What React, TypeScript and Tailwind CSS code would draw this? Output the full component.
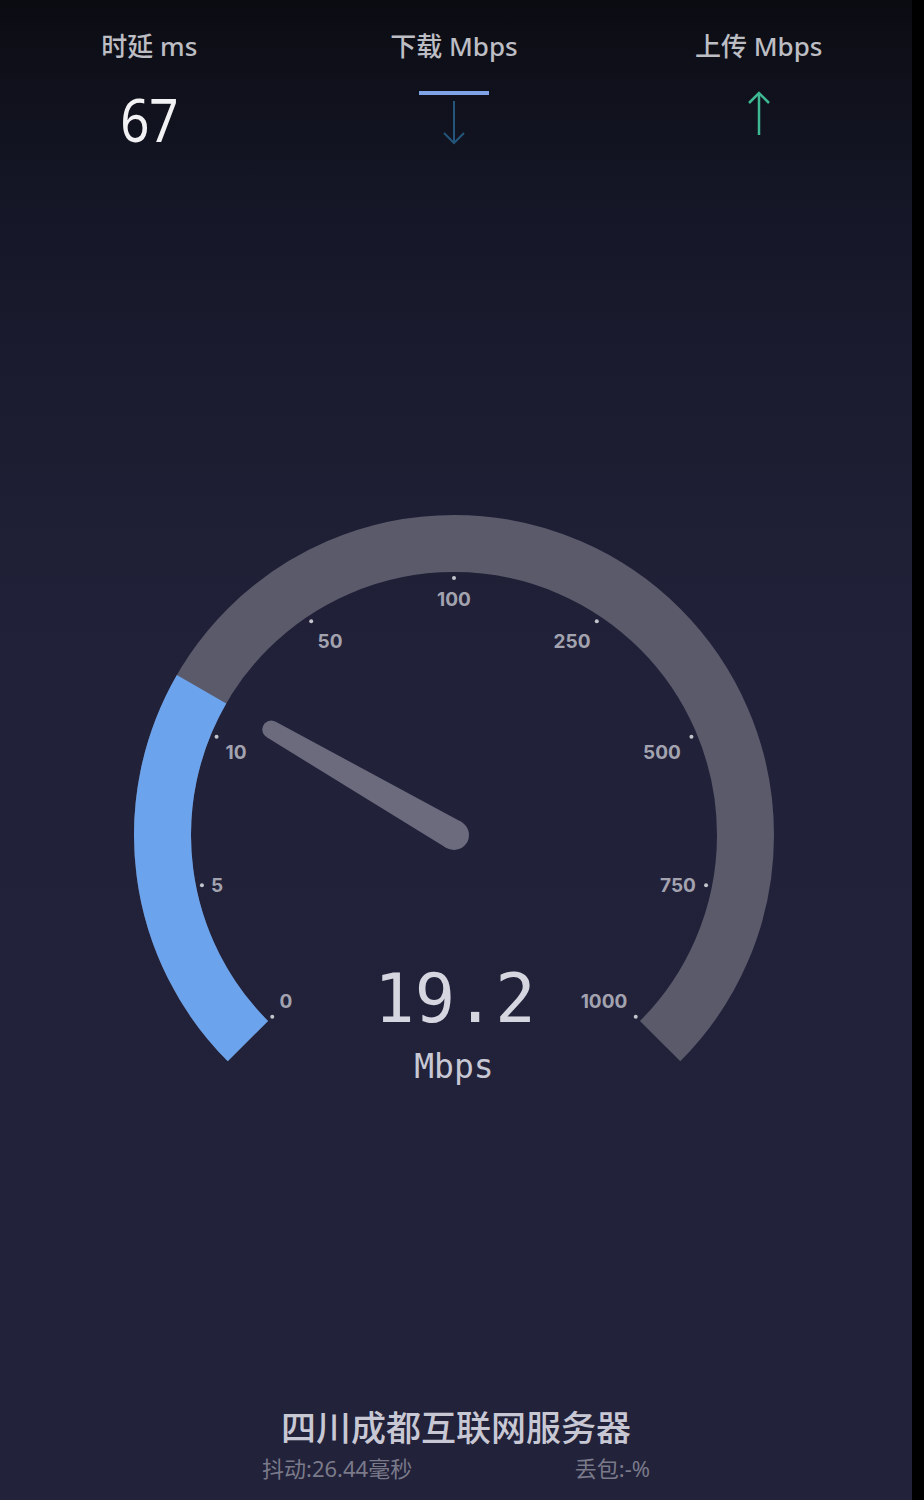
import React from "react";

const CX = 454;
const CY = 355;
const OFF = 480;

function pt(a: number, r: number): [number, number] {
  const rad = (a * Math.PI) / 180;
  return [CX + r * Math.cos(rad), CY + r * Math.sin(rad)];
}

function arc(a0: number, a1: number, r: number) {
  const [x0, y0] = pt(a0, r);
  const [x1, y1] = pt(a1, r);
  const large = a1 - a0 > 180 ? 1 : 0;
  return `M ${x0} ${y0} A ${r} ${r} 0 ${large} 1 ${x1} ${y1}`;
}

const ticks = [
  { label: "0", x: 286, y: 1001 },
  { label: "5", x: 217, y: 885 },
  { label: "10", x: 236, y: 752 },
  { label: "50", x: 330, y: 641 },
  { label: "100", x: 454, y: 599 },
  { label: "250", x: 572, y: 641 },
  { label: "500", x: 662, y: 752 },
  { label: "750", x: 678, y: 885 },
  { label: "1000", x: 604, y: 1001 },
];

function Needle({ angle }: { angle: number }) {
  const len = 211;
  const [tx, ty] = pt(angle, len);
  const p1 = (angle + 90) * (Math.PI / 180);
  const p2 = (angle - 90) * (Math.PI / 180);
  const b = 15;
  const t = 9;
  const pts = [
    [CX + b * Math.cos(p1), CY + b * Math.sin(p1)],
    [tx + t * Math.cos(p1), ty + t * Math.sin(p1)],
    [tx + t * Math.cos(p2), ty + t * Math.sin(p2)],
    [CX + b * Math.cos(p2), CY + b * Math.sin(p2)],
  ]
    .map((p) => p.join(","))
    .join(" ");
  return (
    <g fill="#6c6b7e">
      <polygon points={pts} />
      <circle cx={CX} cy={CY} r={b} />
      <circle cx={tx} cy={ty} r={t} />
    </g>
  );
}

function Gauge() {
  return (
    <svg width={912} height={640} viewBox="0 0 912 640" className="mt-[320px] block">
      <path d={arc(135, 405, 291.5)} fill="none" stroke="#5b5a6b" strokeWidth={57} />
      <path d={arc(135, 210, 291.5)} fill="none" stroke="#6ba3ec" strokeWidth={57} />
      {ticks.map((tk, i) => {
        const [dx, dy] = pt(135 + i * 33.75, 257);
        return (
          <g key={tk.label}>
            <circle cx={dx} cy={dy} r={2} fill="#c4c4cc" />
            <text
              x={tk.x}
              y={tk.y - OFF}
              textAnchor="middle"
              dominantBaseline="central"
              fontFamily="Inter, 'Noto Sans', sans-serif"
              fontWeight={700}
              fontSize={19}
              fill="#a3a3b0"
            >
              {tk.label}
            </text>
          </g>
        );
      })}
      <Needle angle={210} />
      <text
        x={455}
        y={542}
        textAnchor="middle"
        fontFamily="'DejaVu Sans Mono', monospace"
        fontSize={67}
        fill="#d6d6e0"
      >
        19.2
      </text>
      <text
        x={454}
        y={598}
        textAnchor="middle"
        fontFamily="'DejaVu Sans Mono', monospace"
        fontSize={33}
        fill="#c8c8d4"
      >
        Mbps
      </text>
    </svg>
  );
}

function DownloadIcon() {
  return (
    <svg width={72} height={56} viewBox="0 0 72 56" className="mt-[3px]">
      <rect x={1} y={0} width={70} height={4} fill="#7ea3e6" />
      <line x1={36} y1={10} x2={36} y2={52} stroke="#24557a" strokeWidth={2} />
      <polyline points="26,42 36,52 46,42" fill="none" stroke="#24557a" strokeWidth={2} />
    </svg>
  );
}

function UploadIcon() {
  return (
    <svg width={30} height={46} viewBox="0 0 30 46" className="mt-[3px]">
      <line x1={15} y1={2} x2={15} y2={44} stroke="#3db892" strokeWidth={2.5} />
      <polyline points="5,12 15,2 25,12" fill="none" stroke="#3db892" strokeWidth={2.5} />
    </svg>
  );
}

export default function App() {
  const label = "text-[26px] leading-[32px] font-medium text-[#bdbdc4] font-['Noto_Sans','Noto_Sans_CJK_SC',sans-serif]";
  return (
    <div className="flex h-[1500px] w-[924px]">
      <div className="flex w-[912px] flex-col bg-[linear-gradient(180deg,#0b0c12_0%,#141626_13%,#1c1c30_27%,#21213a_45%,#22223a_100%)]">
        <div className="grid h-[160px] grid-cols-3 pt-[30px] pr-[4px]">
          <div className="flex flex-col items-center pr-[4px]">
            <div className={label}>时延 ms</div>
            <div className="mt-[26px] flex h-[62px] items-center">
              <span className="inline-block scale-x-[0.85] font-['Noto_Sans',sans-serif] text-[60px] leading-[60px] text-[#f2f2f4]">
                67
              </span>
            </div>
          </div>
          <div className="flex flex-col items-center">
            <div className={label}>下载 Mbps</div>
            <div className="mt-[26px] flex h-[62px] items-start">
              <DownloadIcon />
            </div>
          </div>
          <div className="flex flex-col items-center pl-[4px]">
            <div className={label}>上传 Mbps</div>
            <div className="mt-[26px] flex h-[62px] items-start">
              <UploadIcon />
            </div>
          </div>
        </div>
        <Gauge />
        <div className="flex-1" />
        <div className="flex flex-col items-center pb-[19px] font-['Noto_Sans','Noto_Sans_CJK_SC',sans-serif]">
          <div className="text-[35px] font-medium leading-[40px] text-[#c8c8d4]">四川成都互联网服务器</div>
          <div className="mt-[7px] flex w-[388px] justify-between text-[22px] leading-[26px] text-[#7a7a8a]">
            <span>抖动:26.44毫秒</span>
            <span>丢包:-%</span>
          </div>
        </div>
      </div>
      <div className="w-[12px] bg-black" />
    </div>
  );
}
